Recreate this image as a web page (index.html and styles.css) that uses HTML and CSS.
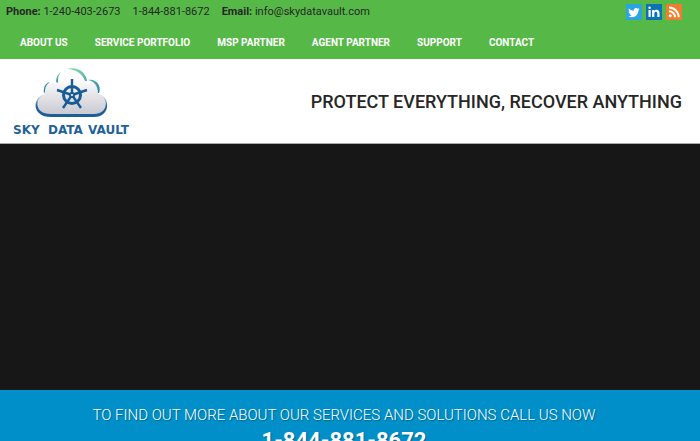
FILE: index.html
```
<!DOCTYPE html>
<html lang="en">
<head>
<meta charset="utf-8">
<meta name="viewport" content="width=device-width, initial-scale=1">
<title>Sky Data Vault</title>
<link rel="stylesheet" href="styles.css">
</head>
<body>
<header>
  <div class="topbar">
    <div class="contact">
      <span><strong>Phone:</strong> 1-240-403-2673</span>
      <span>1-844-881-8672</span>
      <span><strong>Email:</strong> <a href="mailto:info@skydatavault.com">info@skydatavault.com</a></span>
    </div>
    <div class="social">
      <a href="#" aria-label="Twitter"><svg viewBox="0 0 16 16"><rect width="16" height="16" fill="#2aa5e0"/><path fill="#fff" d="M13.6 4.9l-1.2.4.9-1.2-1.5.6a2.4 2.4 0 0 0-4.1 2.1C5.700 6.700 4 5.800 2.900 4.300c-.7 1.200-.3 2.500.7 3.200l-1-.3c0 1.200.8 2.100 1.900 2.400h-1c.3 1 1.200 1.600 2.200 1.600-1 .8-2.200 1.100-3.500 1 4.600 2.700 10.200 0 10.200-5.900z"/></svg></a>
      <a href="#" aria-label="LinkedIn"><svg viewBox="0 0 16 16"><rect width="16" height="16" fill="#0b72b5"/><path fill="#fff" d="M2.500 6h2.200v7H2.500zM6.100 6h2.100v1c1.200-2 5.300-1.700 5.300 2v4h-2.200V9.600c0-2.400-3-2.200-3 0V13H6.100z"/><circle cx="3.600" cy="3.700" r="1.300" fill="#fff"/></svg></a>
      <a href="#" aria-label="RSS"><svg viewBox="0 0 16 16"><rect width="16" height="16" fill="#ef7d2d"/><circle cx="4.200" cy="11.800" r="1.500" fill="#fff"/><path fill="none" stroke="#fff" stroke-width="2" d="M3 7.200a6 6 0 0 1 6 6M3 3.500a9.700 9.700 0 0 1 9.700 9.700"/></svg></a>
    </div>
  </div>
  <nav class="menu">
    <a href="#">ABOUT US</a>
    <a href="#">SERVICE PORTFOLIO</a>
    <a href="#">MSP PARTNER</a>
    <a href="#">AGENT PARTNER</a>
    <a href="#">SUPPORT</a>
    <a href="#">CONTACT</a>
  </nav>
  <div class="brand">
    <a class="logo" href="#" aria-label="Sky Data Vault">
      <svg viewBox="0 0 124 72">
        <defs>
          <linearGradient id="cloud" gradientUnits="userSpaceOnUse" x1="0" y1="12" x2="0" y2="48"><stop offset="0" stop-color="#fff"/><stop offset="1" stop-color="#c9cad2"/></linearGradient>
          <linearGradient id="edge" gradientUnits="userSpaceOnUse" x1="0" y1="27" x2="0" y2="40"><stop offset="0" stop-color="#1c5f98" stop-opacity="0"/><stop offset="1" stop-color="#1c5f98"/></linearGradient>
          <linearGradient id="arc" gradientUnits="userSpaceOnUse" x1="0" y1="2" x2="0" y2="27"><stop offset="0" stop-color="#7bd9a4"/><stop offset="1" stop-color="#267ca8"/></linearGradient>
        </defs>
        <path fill="url(#edge)" d="M39 51C19 51 20 31 33 28L87 28C99 32 98 51 82 51Z"/>
        <path fill="url(#cloud)" d="M39 48C21 48 23 31 33 28C31 20 38 15 46 18C46 -1 72 -1 74 18C82 14 88 21 86 28C98 32 96 48 82 48Z"/>
        <path fill="url(#arc)" d="M55 3C65 0 74 6 75 15H73C71 8 64 3 55 3ZM76 14C84 12 90 20 87 27H86C86 20 82 15 76 14ZM44 16C44 11 46 8 49 6C46 10 46 12 46 17ZM32 27C31 22 33 17 38 16C34 19 33 22 33 26Z"/>
        <g stroke="#195b94" fill="none">
          <circle cx="60" cy="29" r="8.500" stroke-width="3"/>
          <path stroke-width="2.400" d="M60 29V13M60 29L45 24M60 29L75 24M60 29L51 42M60 29L69 42"/>
          <circle cx="60" cy="29" r="2" fill="#fff" stroke-width="2"/>
        </g>
        <text class="wordmark" y="68"><tspan x="1">SKY</tspan> <tspan x="36">DATA</tspan> <tspan x="76">VAULT</tspan></text>
      </svg>
    </a>
    <h1>PROTECT EVERYTHING, RECOVER ANYTHING</h1>
  </div>
</header>
<main>
  <section class="slider" aria-label="Featured"></section>
  <section class="callout">
    <p>TO FIND OUT MORE ABOUT OUR SERVICES AND SOLUTIONS CALL US NOW</p>
    <strong>1-844-881-8672</strong>
  </section>
</main>
</body>
</html>
```
FILE: styles.css
```
* { box-sizing: border-box; }
html { overflow: hidden; }
body { margin: 0; font-family: Roboto, sans-serif; color: #262626; background: #fff; }
a { color: inherit; text-decoration: none; }
.topbar { display: flex; justify-content: space-between; align-items: center; height: 24px; padding: 0 18px 0 6px; background: #56b947; }
.contact { display: flex; gap: 12px; font-size: 11px; line-height: 24px; }
.social { display: flex; gap: 4px; }
.social svg { display: block; width: 16px; height: 16px; }
.menu { display: flex; gap: 27px; height: 35px; padding: 0 20px; background: #56b947; color: #fff; font-size: 10px; font-weight: 700; line-height: 37px; }
.brand { display: flex; justify-content: space-between; align-items: center; padding: 7px 18px 5px 12px; border-bottom: 1px solid #aaa; }
.logo svg { display: block; width: 124px; height: 72px; overflow: visible; }
.wordmark { font: bold 12px "DejaVu Sans", sans-serif; fill: #1f6299; }
h1 { margin: 0; font-size: 18px; font-weight: 500; line-height: 24px; }
.slider { height: 246px; background: #171717; }
.callout { padding: 13px 31px 13px 19px; background: #008fc9; color: #fff; text-align: center; text-shadow: 1px 1px 1px rgba(0, 0, 0, 0.3); }
.callout p { margin: 0; font-size: 15px; font-weight: 300; line-height: 24px; }
.callout strong { display: block; font-size: 22px; line-height: 28px; }
```
